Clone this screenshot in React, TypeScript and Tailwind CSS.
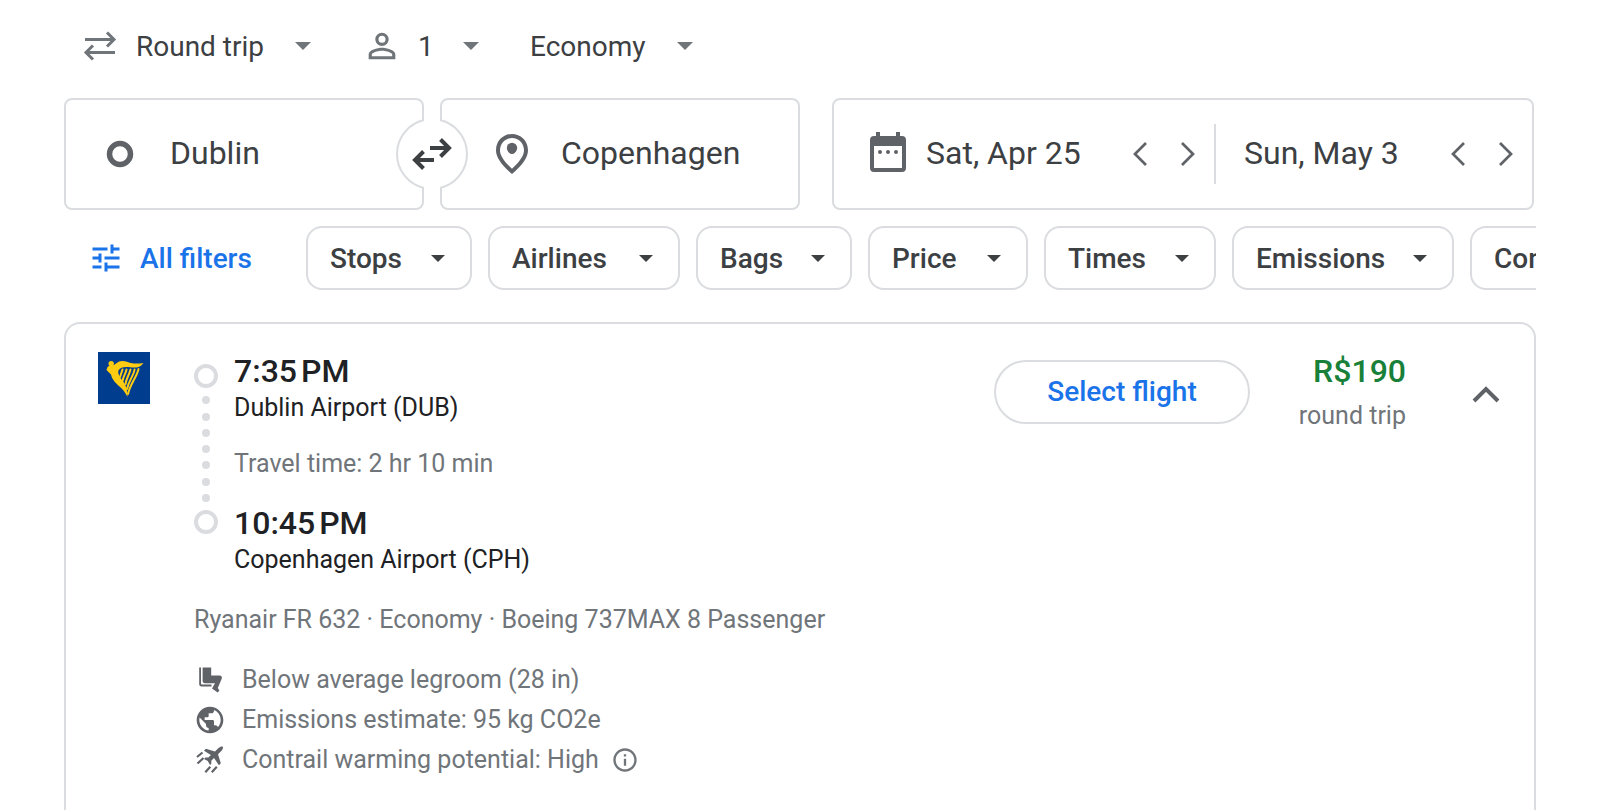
import type { ReactNode } from "react";
import { MdInfoOutline, MdOutlinePlace, MdPersonOutline, MdPublic, MdTune } from "react-icons/md";

const filters = [
  { label: "Stops", width: "w-[166px]" },
  { label: "Airlines", width: "w-[192px]" },
  { label: "Bags", width: "w-[156px]" },
  { label: "Price", width: "w-[160px]" },
  { label: "Times", width: "w-[172px]" },
  { label: "Emissions", width: "w-[222px]" },
  { label: "Connecting airports", width: "w-[340px]" },
];

function Caret({ className }: { className?: string }) {
  return (
    <svg viewBox="0 0 16 8" className={className} fill="currentColor" aria-hidden="true">
      <path d="M0 0h16L8 8z" />
    </svg>
  );
}

function RoundTripIcon() {
  return (
    <svg width="34" height="30" viewBox="0 0 34 30" fill="none" stroke="currentColor" strokeWidth="3" aria-hidden="true">
      <path d="M2 8.5H31M24 1.5l7 7-7 7M32 21.5H3M10 14.5l-7 7 7 7" />
    </svg>
  );
}

function SwapIcon() {
  return (
    <svg width="72" height="72" viewBox="0 0 72 72" fill="none" aria-hidden="true">
      <circle cx="36" cy="36" r="35" fill="#fff" />
      <path d="M28 1.93A35 35 0 0 0 28 70.07M44 1.93A35 35 0 0 1 44 70.07" stroke="#dadce0" strokeWidth="2" />
      <path d="M34 30h19M44.5 21.5 53 30l-8.5 8.5M38 42H19M27.5 33.5 19 42l8.5 8.5" stroke="#3c4043" strokeWidth="4" />
    </svg>
  );
}

function PinIcon() {
  return (
    <span className="relative shrink-0">
      <MdOutlinePlace size={48} color="#5f6368" />
      <svg width="48" height="48" viewBox="0 0 24 24" className="absolute inset-0" aria-hidden="true">
        <circle cx="12" cy="9" r="2.6" fill="#5f6368" />
      </svg>
    </span>
  );
}

function CalendarIcon() {
  return (
    <svg width="36" height="40" viewBox="0 0 36 40" fill="#5f6368" aria-hidden="true">
      <path
        fillRule="evenodd"
        d="M6 0h4v4h16V0h4v4h2a4 4 0 0 1 4 4v28a4 4 0 0 1-4 4H4a4 4 0 0 1-4-4V8a4 4 0 0 1 4-4h2zM4 14v22h28V14z"
      />
      <circle cx="10" cy="20" r="2" />
      <circle cx="18" cy="20" r="2" />
      <circle cx="26" cy="20" r="2" />
    </svg>
  );
}

function Chevron({ direction }: { direction: "left" | "right" }) {
  return (
    <svg width="14" height="24" viewBox="0 0 14 24" fill="none" stroke="#5f6368" strokeWidth="2.7" aria-hidden="true">
      <path d={direction === "left" ? "M13 1 2 12l11 11" : "M1 1l11 11L1 23"} />
    </svg>
  );
}

function RyanairLogo() {
  return (
    <svg width="52" height="52" viewBox="0 0 52 52" className="shrink-0" role="img" aria-label="Ryanair">
      <path fill="#003d8f" d="M0 0h52v52H0z" />
      <g fill="#fc1">
        <circle cx="13.2" cy="11.600" r="2.700" />
        <path d="M16 13c2-1 4-4 8-4 4 0 7 2 12 2.500 3 .300 6 0 9.500-.500-1.500 1-1.500 3-5 4-4 1.300-9 0-12 0-4 0-7 1-8 3.500-1 2.500 1 6 3 9 4 5 5.500 7 6 17.500-2-4-4-7-8-10.500-4-3.500-7.500-7-8.500-12L8.500 18l1-3 2-1.500z" />
      </g>
      <path
        fill="none"
        stroke="#fc1"
        strokeWidth="2"
        strokeLinecap="round"
        d="M24.500 17.500 22 25M28.500 17.500c-1 5-3 6-4 11.500M32.500 17.500c-1 5-4 8-5 14.500M36.500 17.500C36 23 31 28 29 37M40.500 17c-1.500 8-8 14-10.500 25"
      />
    </svg>
  );
}

function LegroomIcon() {
  return (
    <svg width="32" height="32" viewBox="0 0 32 32" fill="#5f6368" aria-hidden="true">
      <path d="M5.200 3.500H7V19.500c0 .7.300 1 1 1h9.500v1.900H7.500c-1.500 0-2.300-.8-2.300-2.300z" />
      <path d="M8.600 3.500H17.200v8h8.300c2 0 2.800 1.600 2.200 3.200L23.800 24l1.600 2.600-1.700 2-5.700-4.200 3-5.200H11c-1.600 0-2.400-.8-2.400-2.400z" />
    </svg>
  );
}

function ContrailIcon() {
  return (
    <svg width="32" height="32" viewBox="0 0 32 32" fill="#5f6368" aria-hidden="true">
      <path d="M24.500 4c1.500-1.500 3.600-1.900 4.200-1.300.6.600.2 2.700-1.200 4.100L24 10.300l2.800 9-1.900 1.900-4.900-7.200-2.700 2.700v3L16 21l-2.200-3.900-3.800-2.200 1.400-1.400h3l2.500-2.500L10 6.700l1.900-1.900 9.100 2.700z" />
      <path d="m3 13 5.500-4.500M3.500 19.500l6-5.500M11.300 28.200l5-5.500M17.800 28.200l5-5.500" stroke="#5f6368" strokeWidth="2.200" />
    </svg>
  );
}

function Detail({ icon, children }: { icon: ReactNode; children: ReactNode }) {
  return (
    <li className="flex h-10 items-center gap-4">
      {icon}
      {children}
    </li>
  );
}

function DateStepper({ label }: { label: string }) {
  return (
    <div className="flex shrink-0 pr-[2px]">
      <button type="button" aria-label={`${label} one day earlier`} className="flex h-12 w-12 items-center justify-center">
        <Chevron direction="left" />
      </button>
      <button type="button" aria-label={`${label} one day later`} className="flex h-12 w-12 items-center justify-center">
        <Chevron direction="right" />
      </button>
    </div>
  );
}

function TripOptions() {
  return (
    <div className="flex h-[60px] items-center text-[28px] text-[#3c4043]">
      <label className="flex items-center text-[#70757a]">
        <RoundTripIcon />
        <select aria-label="Trip type" className="-mr-4 ml-[19px] w-[175px] appearance-none bg-transparent pt-[2px] text-[#3c4043]">
          <option>Round trip</option>
        </select>
        <Caret className="h-2 w-4" />
      </label>
      <label className="ml-[51px] flex items-center text-[#70757a]">
        <MdPersonOutline size={40} />
        <select aria-label="Passengers" className="-mr-4 ml-4 w-[61px] appearance-none bg-transparent pt-[2px] text-[#3c4043]">
          <option>1</option>
        </select>
        <Caret className="h-2 w-4" />
      </label>
      <label className="ml-[51px] flex items-center text-[#70757a]">
        <select aria-label="Cabin class" className="-mr-4 w-[163px] appearance-none bg-transparent pt-[2px] text-[#3c4043]">
          <option>Economy</option>
        </select>
        <Caret className="h-2 w-4" />
      </label>
    </div>
  );
}

function SearchFields() {
  return (
    <div className="mt-[22px] grid grid-cols-[736fr_704fr] gap-8 text-[32px] text-[#3c4043]">
      <div className="relative grid grid-cols-2 gap-4">
        <label className="flex h-28 items-center gap-9 rounded-lg border-2 border-[#dadce0] pl-10">
          <svg width="28" height="28" viewBox="0 0 28 28" className="shrink-0" aria-hidden="true">
            <circle cx="14" cy="14" r="10.5" fill="none" stroke="#5f6368" strokeWidth="5.5" />
          </svg>
          <input aria-label="Where from?" defaultValue="Dublin" className="w-full min-w-0 bg-transparent pb-[2px] outline-none" />
        </label>
        <label className="flex h-28 items-center gap-[25px] rounded-lg border-2 border-[#dadce0] pl-[46px]">
          <PinIcon />
          <input aria-label="Where to?" defaultValue="Copenhagen" className="w-full min-w-0 bg-transparent pb-[2px] outline-none" />
        </label>
        <button
          type="button"
          aria-label="Swap origin and destination"
          className="absolute top-1/2 left-1/2 -translate-x-1/2 -translate-y-1/2 rounded-full"
        >
          <SwapIcon />
        </button>
      </div>
      <div className="mr-[2px] grid h-28 grid-cols-[380fr_2px_316fr] items-center rounded-lg border-2 border-[#dadce0]">
        <div className="flex items-center">
          <label className="flex min-w-0 flex-1 items-center gap-5 pl-9">
            <span className="shrink-0 pb-1">
              <CalendarIcon />
            </span>
            <input aria-label="Departure" defaultValue="Sat, Apr 25" className="w-full min-w-0 bg-transparent pb-[2px] outline-none" />
          </label>
          <DateStepper label="Departure" />
        </div>
        <div className="h-[60px] bg-[#dadce0]" />
        <div className="flex items-center">
          <label className="flex min-w-0 flex-1 pl-7">
            <input aria-label="Return" defaultValue="Sun, May 3" className="w-full min-w-0 bg-transparent pb-[2px] outline-none" />
          </label>
          <DateStepper label="Return" />
        </div>
      </div>
    </div>
  );
}

function FilterBar() {
  return (
    <div className="mt-4 flex gap-4 overflow-hidden text-[28px] font-medium text-[#3c4043]">
      <button type="button" className="flex h-16 w-[226px] shrink-0 items-center gap-4 pl-6 text-[#1a73e8]">
        <MdTune size={36} />
        <span className="pt-[2px]">All filters</span>
      </button>
      {filters.map((filter) => (
        <button
          key={filter.label}
          type="button"
          className={`flex h-16 shrink-0 items-center justify-between rounded-2xl border-2 border-[#dadce0] pr-[25px] pl-[22px] whitespace-nowrap ${filter.width}`}
        >
          <span className="pt-[2px]">{filter.label}</span>
          <Caret className="h-[7px] w-[14px]" />
        </button>
      ))}
    </div>
  );
}

function FlightCard() {
  return (
    <section className="mt-8 flex flex-1 items-start rounded-t-2xl border-2 border-b-0 border-[#dadce0] pt-7 pr-4 pb-8 pl-8 text-[25px] leading-9 text-[#70757a]">
      <RyanairLogo />
      <div className="ml-11 flex-1">
        <div className="flex gap-4">
          <div className="flex w-6 flex-col items-center pt-3">
            <span className="h-6 w-6 rounded-full border-4 border-[#dadce0]" />
            <div className="flex h-[122px] flex-col justify-evenly">
              {[0, 1, 2, 3, 4, 5, 6].map((dot) => (
                <span key={dot} className="h-2 w-2 rounded-full bg-[#dadce0]" />
              ))}
            </div>
            <span className="h-6 w-6 rounded-full border-4 border-[#dadce0]" />
          </div>
          <div>
            <p className="text-[32px] leading-[38px] font-medium text-[#202124]">7:35{"\u202f"}PM</p>
            <p className="text-[#202124]">Dublin Airport (DUB)</p>
            <p className="mt-5">Travel time: 2 hr 10 min</p>
            <p className="mt-[22px] text-[32px] leading-[38px] font-medium text-[#202124]">10:45{"\u202f"}PM</p>
            <p className="text-[#202124]">Copenhagen Airport (CPH)</p>
          </div>
        </div>
        <p className="mt-6">Ryanair FR 632 · Economy · Boeing 737MAX 8 Passenger</p>
        <ul className="mt-[22px]">
          <Detail icon={<LegroomIcon />}>Below average legroom (28 in)</Detail>
          <Detail icon={<MdPublic size={32} color="#5f6368" />}>Emissions estimate: 95 kg CO2e</Detail>
          <Detail icon={<ContrailIcon />}>
            <span>Contrail warming potential: High</span>
            <button type="button" aria-label="About contrail warming" className="-ml-1">
              <MdInfoOutline size={28} />
            </button>
          </Detail>
        </ul>
      </div>
      <button
        type="button"
        className="mt-2 h-16 w-64 shrink-0 rounded-full border-2 border-[#dadce0] text-[28px] font-medium text-[#1a73e8]"
      >
        Select flight
      </button>
      <div className="w-[156px] shrink-0 text-right">
        <p className="text-[32px] leading-[38px] font-medium text-[#188038]">R$190</p>
        <p className="mt-2">round trip</p>
      </div>
      <button type="button" aria-label="Hide flight details" className="mt-[10px] ml-12 flex h-16 w-16 shrink-0 items-center justify-center">
        <svg width="28" height="18" viewBox="0 0 28 18" fill="none" stroke="#5f6368" strokeWidth="4" aria-hidden="true">
          <path d="M2 16 14 4l12 12" />
        </svg>
      </button>
    </section>
  );
}

export default function App() {
  return (
    <main className="flex min-h-screen flex-col bg-white px-16 pt-4 font-['Roboto',sans-serif]">
      <div className="pl-[19px]">
        <TripOptions />
      </div>
      <SearchFields />
      <FilterBar />
      <FlightCard />
    </main>
  );
}
